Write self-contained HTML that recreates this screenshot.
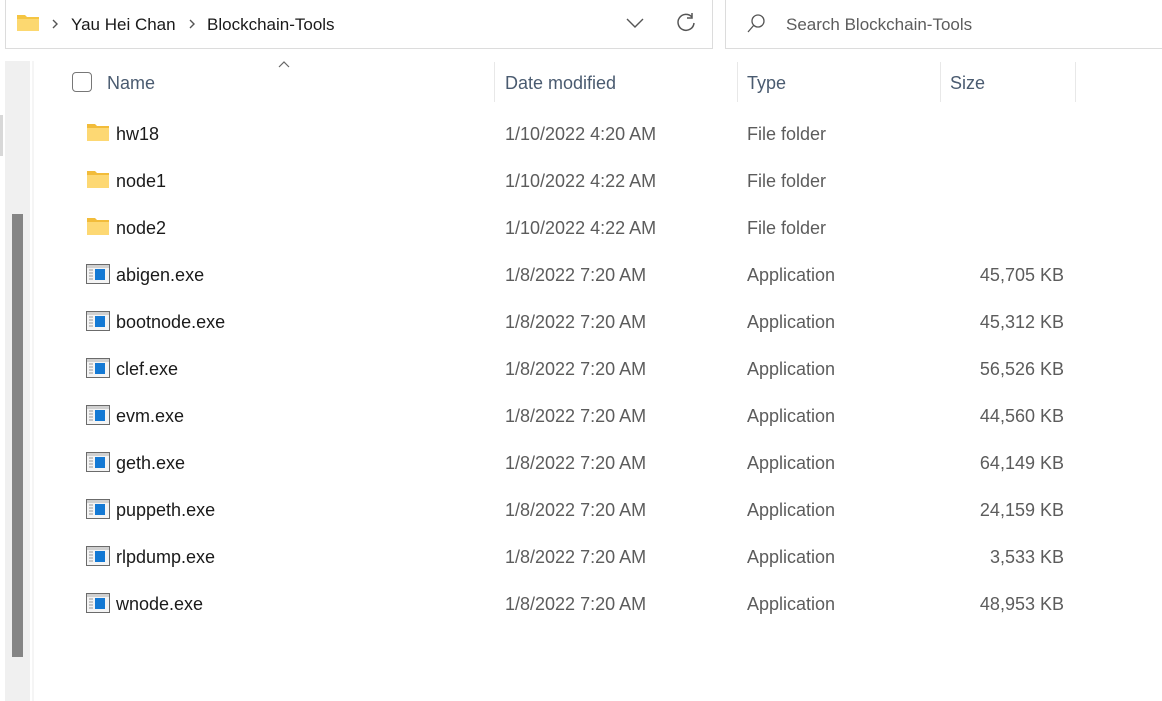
<!DOCTYPE html>
<html><head><style>
*{margin:0;padding:0;box-sizing:border-box}
body{width:1162px;height:692px;background:#fff;position:relative;overflow:hidden;font-family:"Liberation Sans",sans-serif;font-size:18px;color:#1a1a1a}
.a{position:absolute}
.row{position:absolute;left:0;width:1162px;height:47px}
.row span{position:absolute;top:0;line-height:20px}
.n{left:116px;color:#1a1a1a}
.d{left:505px;color:#5c5c5c}
.t{left:747px;color:#5c5c5c}
.s{right:98px;color:#5c5c5c}
.h{position:absolute;top:73px;color:#4a5b70;font-size:18px}
.sep{position:absolute;top:62px;width:1px;height:40px;background:#e8e8e8}
</style></head><body>
<div class="a" style="left:5px;top:-2px;width:708px;height:51px;border:1px solid #dcdcdc;border-top:none"></div>
<div class="a" style="left:725px;top:-2px;width:440px;height:51px;border:1px solid #dcdcdc;border-top:none"></div>
<svg class="a" style="left:16px;top:13px" width="24" height="20" viewBox="0 0 24 20"><path d="M1 2h8l2 2h12v14H1z" fill="#f5c542"/><path d="M1 6h22v12H1z" fill="#fcd870"/></svg>
<svg class="a" style="left:50px;top:18px" width="10" height="12"><path d="M3 2l4 4-4 4" stroke="#555" stroke-width="1.4" fill="none"/></svg>
<div class="a" style="left:71px;top:15px;font-size:17px">Yau Hei Chan</div>
<svg class="a" style="left:187px;top:18px" width="10" height="12"><path d="M3 2l4 4-4 4" stroke="#555" stroke-width="1.4" fill="none"/></svg>
<div class="a" style="left:207px;top:15px;font-size:17px">Blockchain-Tools</div>
<svg class="a" style="left:625px;top:15px" width="20" height="14"><path d="M2 4l8 8 8-8" stroke="#555" stroke-width="1.4" fill="none"/></svg>
<svg class="a" style="left:675px;top:11px" width="22" height="22"><path d="M17 6A8 8 0 1 0 19 12" stroke="#555" stroke-width="1.5" fill="none"/><path d="M17 2v5h-5" stroke="#555" stroke-width="1.5" fill="none"/></svg>
<svg class="a" style="left:745px;top:13px" width="22" height="22"><circle cx="13" cy="8" r="6" stroke="#555" stroke-width="1.3" fill="none"/><path d="M9 12L3 19" stroke="#555" stroke-width="1.3"/></svg>
<div class="a" style="left:786px;top:15px;color:#5c5c5c;font-size:17px">Search Blockchain-Tools</div>
<div class="a" style="left:5px;top:61px;width:25px;height:640px;background:#f0f0f0"></div>
<div class="a" style="left:32px;top:61px;width:2px;height:640px;background:#f5f5f5"></div>
<div class="a" style="left:12px;top:214px;width:11px;height:443px;background:#858585"></div>
<div class="a" style="left:0;top:115px;width:3px;height:41px;background:#d8d8d8"></div>
<div class="a" style="left:72px;top:72px;width:20px;height:20px;border:1.5px solid #777;border-radius:4px"></div>
<svg class="a" style="left:277px;top:60px" width="14" height="10"><path d="M2 7l5-5 5 5" stroke="#666" stroke-width="1.2" fill="none"/></svg>
<div class="h" style="left:107px">Name</div>
<div class="h" style="left:505px">Date modified</div>
<div class="h" style="left:747px">Type</div>
<div class="h" style="left:950px">Size</div>
<div class="sep" style="left:494px"></div><div class="sep" style="left:737px"></div><div class="sep" style="left:940px"></div><div class="sep" style="left:1075px"></div>

<div class="row" style="top:124px"><svg class="a" style="left:87px;top:0" width="22" height="17"><path d="M0 0h8l2 2h12v15H0z" fill="#f2bc3a"/><path d="M0 4h22v13H0z" fill="#fdd873"/></svg><span class="n">hw18</span><span class="d">1/10/2022 4:20 AM</span><span class="t">File folder</span></div>
<div class="row" style="top:171px"><svg class="a" style="left:87px;top:0" width="22" height="17"><path d="M0 0h8l2 2h12v15H0z" fill="#f2bc3a"/><path d="M0 4h22v13H0z" fill="#fdd873"/></svg><span class="n">node1</span><span class="d">1/10/2022 4:22 AM</span><span class="t">File folder</span></div>
<div class="row" style="top:218px"><svg class="a" style="left:87px;top:0" width="22" height="17"><path d="M0 0h8l2 2h12v15H0z" fill="#f2bc3a"/><path d="M0 4h22v13H0z" fill="#fdd873"/></svg><span class="n">node2</span><span class="d">1/10/2022 4:22 AM</span><span class="t">File folder</span></div>

<div class="row" style="top:265px"><svg class="a" style="left:86px;top:-1px" width="24" height="20"><rect x=".5" y=".5" width="23" height="19" fill="#f4f4f4" stroke="#6b6b6b"/><rect x="1" y="1" width="22" height="3" fill="#d0d0d0"/><rect x="9" y="5" width="10" height="11" fill="#1479d4"/><path d="M3 6h4M3 9h4M3 12h4M3 15h4" stroke="#999"/></svg><span class="n">abigen.exe</span><span class="d">1/8/2022 7:20 AM</span><span class="t">Application</span><span class="s">45,705 KB</span></div>
<div class="row" style="top:312px"><svg class="a" style="left:86px;top:-1px" width="24" height="20"><rect x=".5" y=".5" width="23" height="19" fill="#f4f4f4" stroke="#6b6b6b"/><rect x="1" y="1" width="22" height="3" fill="#d0d0d0"/><rect x="9" y="5" width="10" height="11" fill="#1479d4"/><path d="M3 6h4M3 9h4M3 12h4M3 15h4" stroke="#999"/></svg><span class="n">bootnode.exe</span><span class="d">1/8/2022 7:20 AM</span><span class="t">Application</span><span class="s">45,312 KB</span></div>
<div class="row" style="top:359px"><svg class="a" style="left:86px;top:-1px" width="24" height="20"><rect x=".5" y=".5" width="23" height="19" fill="#f4f4f4" stroke="#6b6b6b"/><rect x="1" y="1" width="22" height="3" fill="#d0d0d0"/><rect x="9" y="5" width="10" height="11" fill="#1479d4"/><path d="M3 6h4M3 9h4M3 12h4M3 15h4" stroke="#999"/></svg><span class="n">clef.exe</span><span class="d">1/8/2022 7:20 AM</span><span class="t">Application</span><span class="s">56,526 KB</span></div>
<div class="row" style="top:406px"><svg class="a" style="left:86px;top:-1px" width="24" height="20"><rect x=".5" y=".5" width="23" height="19" fill="#f4f4f4" stroke="#6b6b6b"/><rect x="1" y="1" width="22" height="3" fill="#d0d0d0"/><rect x="9" y="5" width="10" height="11" fill="#1479d4"/><path d="M3 6h4M3 9h4M3 12h4M3 15h4" stroke="#999"/></svg><span class="n">evm.exe</span><span class="d">1/8/2022 7:20 AM</span><span class="t">Application</span><span class="s">44,560 KB</span></div>
<div class="row" style="top:453px"><svg class="a" style="left:86px;top:-1px" width="24" height="20"><rect x=".5" y=".5" width="23" height="19" fill="#f4f4f4" stroke="#6b6b6b"/><rect x="1" y="1" width="22" height="3" fill="#d0d0d0"/><rect x="9" y="5" width="10" height="11" fill="#1479d4"/><path d="M3 6h4M3 9h4M3 12h4M3 15h4" stroke="#999"/></svg><span class="n">geth.exe</span><span class="d">1/8/2022 7:20 AM</span><span class="t">Application</span><span class="s">64,149 KB</span></div>
<div class="row" style="top:500px"><svg class="a" style="left:86px;top:-1px" width="24" height="20"><rect x=".5" y=".5" width="23" height="19" fill="#f4f4f4" stroke="#6b6b6b"/><rect x="1" y="1" width="22" height="3" fill="#d0d0d0"/><rect x="9" y="5" width="10" height="11" fill="#1479d4"/><path d="M3 6h4M3 9h4M3 12h4M3 15h4" stroke="#999"/></svg><span class="n">puppeth.exe</span><span class="d">1/8/2022 7:20 AM</span><span class="t">Application</span><span class="s">24,159 KB</span></div>
<div class="row" style="top:547px"><svg class="a" style="left:86px;top:-1px" width="24" height="20"><rect x=".5" y=".5" width="23" height="19" fill="#f4f4f4" stroke="#6b6b6b"/><rect x="1" y="1" width="22" height="3" fill="#d0d0d0"/><rect x="9" y="5" width="10" height="11" fill="#1479d4"/><path d="M3 6h4M3 9h4M3 12h4M3 15h4" stroke="#999"/></svg><span class="n">rlpdump.exe</span><span class="d">1/8/2022 7:20 AM</span><span class="t">Application</span><span class="s">3,533 KB</span></div>
<div class="row" style="top:594px"><svg class="a" style="left:86px;top:-1px" width="24" height="20"><rect x=".5" y=".5" width="23" height="19" fill="#f4f4f4" stroke="#6b6b6b"/><rect x="1" y="1" width="22" height="3" fill="#d0d0d0"/><rect x="9" y="5" width="10" height="11" fill="#1479d4"/><path d="M3 6h4M3 9h4M3 12h4M3 15h4" stroke="#999"/></svg><span class="n">wnode.exe</span><span class="d">1/8/2022 7:20 AM</span><span class="t">Application</span><span class="s">48,953 KB</span></div>
</body></html>
